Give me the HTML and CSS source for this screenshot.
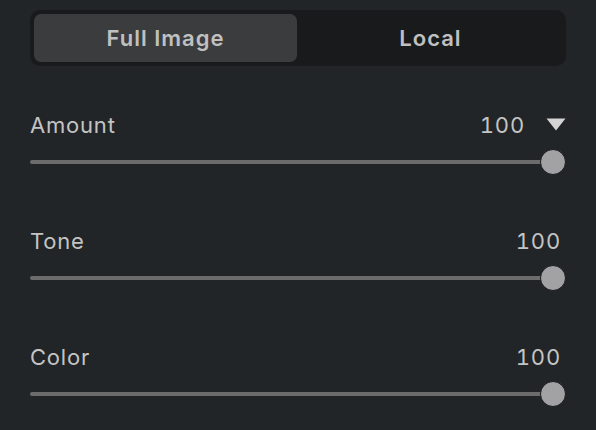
FILE: index.html
```html
<!DOCTYPE html>
<html>
<head>
<meta charset="utf-8">
<link rel="stylesheet" href="styles.css">
</head>
<body>
<div class="panel">
  <div class="segmented">
    <div class="seg active">Full Image</div>
    <div class="seg">Local</div>
  </div>

  <div class="row first">
    <div class="head">
      <span class="label">Amount</span>
      <span class="value-wrap"><span class="value">100</span><svg class="caret" width="20" height="13" viewBox="0 0 20 13"><path d="M0.5 0.5 H19.5 L10 12.5 Z" fill="#d4d4d4"/></svg></span>
    </div>
    <div class="slider"><div class="track"></div><div class="thumb"></div></div>
  </div>

  <div class="row">
    <div class="head">
      <span class="label">Tone</span>
      <span class="value">100</span>
    </div>
    <div class="slider"><div class="track"></div><div class="thumb"></div></div>
  </div>

  <div class="row">
    <div class="head">
      <span class="label">Color</span>
      <span class="value">100</span>
    </div>
    <div class="slider"><div class="track"></div><div class="thumb"></div></div>
  </div>
</div>
</body>
</html>
```

FILE: styles.css
```css
html, body {
  margin: 0;
  padding: 0;
  background: #222528;
  width: 596px;
  height: 430px;
  overflow: hidden;
}
.panel {
  padding: 10px 30px 0 30px;
  font-family: Inter, "Noto Sans", sans-serif;
  color: #c4c4c4;
}
.segmented {
  height: 56px;
  box-sizing: border-box;
  background: #191a1c;
  border-radius: 10px;
  padding: 4px;
  display: flex;
  gap: 2px;
}
.seg {
  flex: 1;
  display: flex;
  align-items: center;
  justify-content: center;
  font-size: 22px;
  font-weight: 600;
  color: #c0c0c0;
  border-radius: 7px;
  letter-spacing: 1px;
}
.seg.active {
  background: #3b3c3e;
}
.row {
  margin-top: 55px;
}
.row.first {
  margin-top: 47px;
}
.head {
  height: 24px;
  display: flex;
  align-items: center;
  justify-content: space-between;
  font-size: 22px;
  font-weight: 400;
  letter-spacing: 0.8px;
  font-variant-numeric: tabular-nums;
  padding-right: 5px;
}
.value-wrap {
  display: flex;
  align-items: center;
  gap: 21px;
  margin-right: -5px;
}
.caret {
  display: block;
  margin-top: -2px;
}
.slider {
  margin-top: 13px;
  height: 24px;
  position: relative;
  display: flex;
  align-items: center;
}
.track {
  flex: 1;
  height: 4px;
  border-radius: 2px;
  background: #6c6c6c;
  margin-right: 2px;
}
.thumb {
  position: absolute;
  right: 0;
  top: -1px;
  width: 24px;
  height: 24px;
  border-radius: 50%;
  background: #a2a2a4;
  border: 1px solid #1a1b1d;
}
```
